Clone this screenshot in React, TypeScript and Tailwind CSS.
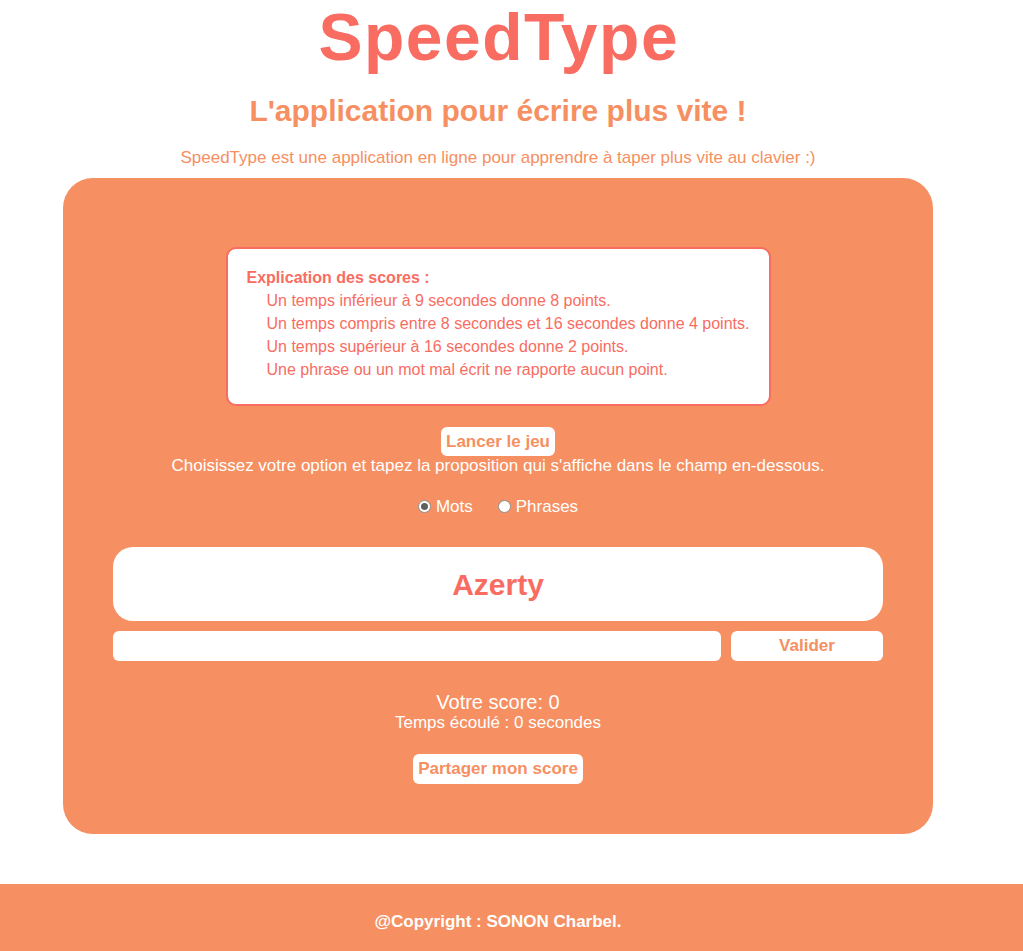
import React, { useState } from 'react';

const rules = [
  'Un temps inférieur à 9 secondes donne 8 points.',
  'Un temps compris entre 8 secondes et 16 secondes donne 4 points.',
  'Un temps supérieur à 16 secondes donne 2 points.',
  'Une phrase ou un mot mal écrit ne rapporte aucun point.',
];

const Radio: React.FC<{ checked: boolean; label: string; onClick: () => void }> = ({ checked, label, onClick }) => (
  <label onClick={onClick} className="flex items-center gap-[5px] cursor-pointer">
    <span className="flex items-center justify-center w-[13px] h-[13px] rounded-full bg-white border border-[#8f8f8f]">
      {checked && <span className="w-[7px] h-[7px] rounded-full bg-[#5f5f5f]" />}
    </span>
    <span>{label}</span>
  </label>
);

const App: React.FC = () => {
  const [mode, setMode] = useState<'mots' | 'phrases'>('mots');

  return (
    <div className="min-h-[951px] bg-white font-['Liberation_Sans',Arial,sans-serif] flex flex-col">
      <main className="w-[996px] flex flex-col items-center">
        <h1 className="text-[66px] font-bold leading-[74px] tracking-[1.5px] pl-[1.5px] text-[#f96c61]">SpeedType</h1>
        <h2 className="text-[30px] font-bold text-[#f68f61] mt-[22px] leading-none">L'application pour écrire plus vite !</h2>
        <p className="text-[17px] text-[#f68f61] mt-[22px] leading-[19px]">
          SpeedType est une application en ligne pour apprendre à taper plus vite au clavier :)
        </p>

        {/* Main panel */}
        <section className="mt-[11px] w-[870px] bg-[#f68f61] rounded-[30px] px-[50px] pt-[69px] pb-[50px] flex flex-col items-center text-white">
          <div className="w-[545px] bg-white border-2 border-[#f96c61] rounded-[10px] pt-[17px] pb-[23px] px-[19px] text-[16px] leading-[23px] text-[#f96c61]">
            <p className="font-bold">Explication des scores :</p>
            <ul className="pl-[20px]">
              {rules.map((r) => (
                <li key={r}>{r}</li>
              ))}
            </ul>
          </div>

          <button className="mt-[21px] h-[29px] px-[5px] bg-white rounded-[6px] text-[#f68f61] font-bold text-[17px]">
            Lancer le jeu
          </button>
          <p className="text-[17px] leading-[19px]">
            Choisissez votre option et tapez la proposition qui s'affiche dans le champ en-dessous.
          </p>

          <div className="flex items-center gap-[25px] mt-[22px] text-[17px] leading-[19px]">
            <Radio checked={mode === 'mots'} label="Mots" onClick={() => setMode('mots')} />
            <Radio checked={mode === 'phrases'} label="Phrases" onClick={() => setMode('phrases')} />
          </div>

          <div className="mt-[31px] w-full h-[74px] bg-white rounded-[20px] flex items-center justify-center">
            <span className="text-[30px] font-bold text-[#f96c61]">Azerty</span>
          </div>

          <div className="mt-[10px] w-full flex gap-[10px]">
            <input type="text" className="flex-1 h-[30px] bg-white rounded-[6px] outline-none px-2 text-black" />
            <button className="w-[152px] h-[30px] bg-white rounded-[6px] text-[#f68f61] font-bold text-[17px]">
              Valider
            </button>
          </div>

          <p className="mt-[30px] text-[20px] leading-[22px]">Votre score: 0</p>
          <p className="text-[17px] leading-[19px]">Temps écoulé : 0 secondes</p>

          <button className="mt-[22px] h-[30px] px-[5px] bg-white rounded-[6px] text-[#f68f61] font-bold text-[17px]">
            Partager mon score
          </button>
        </section>
      </main>

      <footer className="mt-[50px] w-full bg-[#f68f61] flex-1 flex">
        <p className="w-[996px] text-center text-white font-bold text-[17px] leading-[19px] pt-[28px]">@Copyright : SONON Charbel.</p>
      </footer>
    </div>
  );
};

export default App;
